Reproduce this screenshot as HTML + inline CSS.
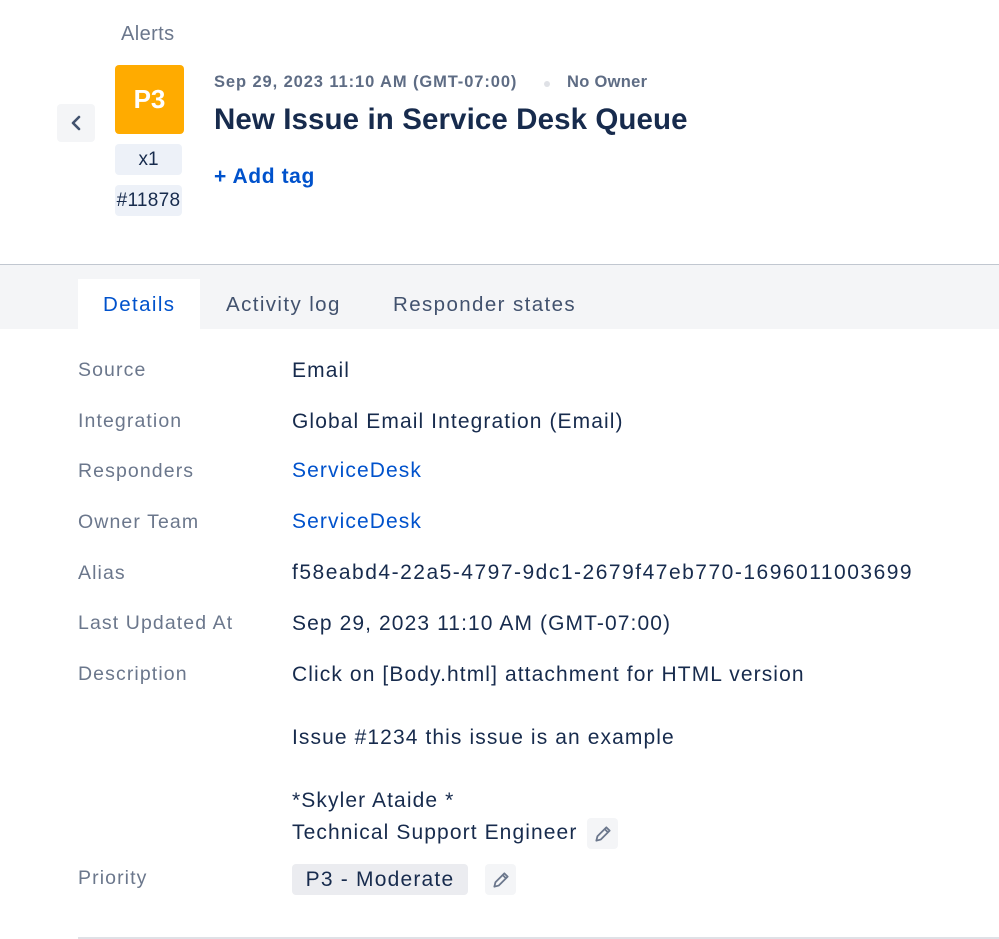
<!DOCTYPE html>
<html><head><meta charset="utf-8"><style>
*{margin:0;padding:0;box-sizing:border-box}
body{width:999px;height:939px;background:#fff;font-family:"Liberation Sans",Arial,sans-serif;position:relative;overflow:hidden;color:#172b4d}
.a{position:absolute;white-space:nowrap}
.lbl{position:absolute;left:78px;font-size:19.5px;color:#6b778c;line-height:24px;letter-spacing:1.1px;white-space:nowrap}
.val{position:absolute;left:292px;font-size:21px;color:#172b4d;line-height:24px;letter-spacing:1.1px;white-space:nowrap}
.blue{color:#0052cc}
.pen{position:absolute;width:31px;height:31px;background:#f4f5f7;border-radius:4px;display:flex;align-items:center;justify-content:center}
.tab{position:absolute;top:293px;font-size:20.5px;letter-spacing:1.4px;white-space:nowrap}
</style></head><body>
<div class="a" style="left:121px;top:23px;font-size:20px;color:#6b778c;letter-spacing:0.4px">Alerts</div>
<div class="a" style="left:57px;top:104px;width:38px;height:38px;background:#f4f5f7;border-radius:4px;display:flex;align-items:center;justify-content:center">
<svg width="14" height="18" viewBox="0 0 14 18"><path d="M10 3 L4 9 L10 15" stroke="#42526e" stroke-width="2.6" fill="none" stroke-linecap="round" stroke-linejoin="round"/></svg></div>
<div class="a" style="left:115px;top:65px;width:69px;height:69px;background:#ffab00;border-radius:4px;color:#fff;font-size:26px;font-weight:bold;display:flex;align-items:center;justify-content:center">P3</div>
<div class="a" style="left:115px;top:144px;width:67px;height:31px;background:#edf1f8;border-radius:4px;font-size:19px;display:flex;align-items:center;justify-content:center">x1</div>
<div class="a" style="left:115px;top:185px;width:67px;height:31px;background:#edf1f8;border-radius:4px;font-size:19px;letter-spacing:0.3px;display:flex;align-items:center;justify-content:center">#11878</div>
<div class="a" style="left:214px;top:73px;font-size:16.5px;color:#5e6c84;font-weight:bold;letter-spacing:0.9px">Sep 29, 2023 11:10 AM (GMT-07:00)</div>
<div class="a" style="left:544px;top:81px;width:6px;height:6px;border-radius:3px;background:#dfe1e6"></div>
<div class="a" style="left:567px;top:73px;font-size:16.5px;color:#5e6c84;font-weight:bold;letter-spacing:0.3px">No Owner</div>
<div class="a" style="left:214px;top:103px;font-size:29.5px;font-weight:bold;color:#172b4d;letter-spacing:0.1px">New Issue in Service Desk Queue</div>
<div class="a" style="left:214px;top:165px;font-size:21px;color:#0052cc;font-weight:bold;letter-spacing:0.6px">+ Add tag</div>
<div class="a" style="left:0;top:264px;width:999px;height:1px;background:#c1c7d0"></div>
<div class="a" style="left:0;top:265px;width:999px;height:64px;background:#f4f5f7"></div>
<div class="a" style="left:78px;top:279px;width:122px;height:50px;background:#fff"></div>
<div class="tab" style="left:103px;color:#0052cc">Details</div>
<div class="tab" style="left:226px;color:#42526e">Activity log</div>
<div class="tab" style="left:393px;color:#42526e">Responder states</div>
<div class="lbl" style="top:358px">Source</div><div class="val" style="top:359px">Email</div>
<div class="lbl" style="top:409px">Integration</div><div class="val" style="top:410px">Global Email Integration (Email)</div>
<div class="lbl" style="top:459px">Responders</div><div class="val blue" style="top:459px">ServiceDesk</div>
<div class="lbl" style="top:510px">Owner Team</div><div class="val blue" style="top:510px">ServiceDesk</div>
<div class="lbl" style="top:561px">Alias</div><div class="val" style="top:561px;letter-spacing:1.5px">f58eabd4-22a5-4797-9dc1-2679f47eb770-1696011003699</div>
<div class="lbl" style="top:611px">Last Updated At</div><div class="val" style="top:612px">Sep 29, 2023 11:10 AM (GMT-07:00)</div>
<div class="lbl" style="top:662px">Description</div>
<div class="val" style="top:663px">Click on [Body.html] attachment for HTML version</div>
<div class="val" style="top:726px">Issue #1234 this issue is an example</div>
<div class="val" style="top:789px">*Skyler Ataide *</div>
<div class="val" style="top:821px">Technical Support Engineer</div>
<div class="pen" style="left:587px;top:818px"><svg width="20" height="20" viewBox="0 0 18 18"><path d="M3 15 L4 11 L12 3 L15 6 L7 14 Z M10.5 4.5 L13.5 7.5" stroke="#6b778c" stroke-width="1.6" fill="none" stroke-linejoin="round"/></svg></div>
<div class="lbl" style="top:866px">Priority</div>
<div class="a" style="left:292px;top:864px;width:176px;height:31px;background:#ebecf0;border-radius:4px;font-size:21px;letter-spacing:1.2px;display:flex;align-items:center;justify-content:center">P3 - Moderate</div>
<div class="pen" style="left:485px;top:864px"><svg width="20" height="20" viewBox="0 0 18 18"><path d="M3 15 L4 11 L12 3 L15 6 L7 14 Z M10.5 4.5 L13.5 7.5" stroke="#6b778c" stroke-width="1.6" fill="none" stroke-linejoin="round"/></svg></div>
<div class="a" style="left:78px;top:937px;width:921px;height:2px;background:#dfe1e6"></div>
</body></html>
